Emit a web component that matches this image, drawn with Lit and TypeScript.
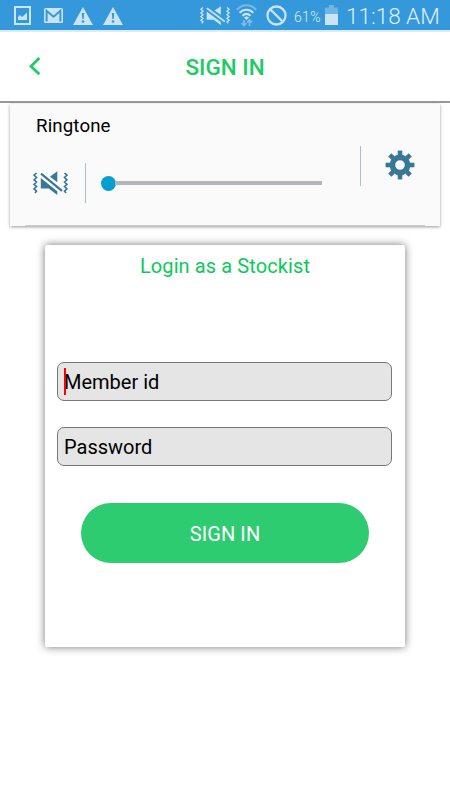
import { LitElement, html, css, svg } from "lit";
import { customElement } from "lit/decorators.js";

const muteShapes = svg`
  <path d="M3.5 2 1 4.2 3.5 6.5 1 8.8 3.5 11 1 13.3 3.5 15.6 1 17.9 3.5 20.1 2 22M31.5 2 34 4.2 31.5 6.5 34 8.8 31.5 11 34 13.3 31.5 15.6 34 17.9 31.5 20.1 33 22" fill="none" stroke="currentColor" stroke-width="1.6"/>
  <path d="M24.3.2V11.2L17 5.7ZM7.8 7 24.3 20.2V24L15.7 17.4H7.8Z" fill="currentColor"/>
  <path d="M8 2.6 29 19.8" stroke="currentColor" stroke-width="2.2"/>`;

@customElement("status-bar")
export class StatusBar extends LitElement {
  static styles = css`
    :host { display: flex; box-sizing: border-box; height: 32px; padding-left: 14px; background: #3498db; border-bottom: 2px solid #0c8ddb; border-image: linear-gradient(#078bdb 50%, #d9ecf8 50%) 2; color: #c9e4f6; align-items: center; }
    svg { display: block; flex: none; }
    .image { margin-top: 1px; }
    .mail { margin-left: 12.5px; margin-top: 1px; }
    .warn { margin-left: 10.5px; margin-top: 2px; }
    .warn.second { margin-left: 10px; }
    .mute { margin-left: 77px; }
    .wifi { margin-left: 6px; margin-top: 1px; }
    .block { margin-left: 9px; margin-top: 1px; }
    .percent { width: 27px; margin: 3px 0 0 7px; font: 300 14px/20px Roboto, sans-serif; white-space: nowrap; color: #def0fb; letter-spacing: 0.3px; }
    .battery { margin-left: 4px; }
    .clock { margin: 4px 0 0 8px; font: 300 22.6px/26px Roboto, sans-serif; white-space: nowrap; letter-spacing: -0.05px; color: #def0fb; }
  `;
  render() {
    const warning = svg`<path d="M10 0 20 18H0Z" fill="currentColor"/><path d="M8.8 6h2.4l-.5 6H9.3Z" fill="#3498db"/><circle cx="10" cy="14.5" r="1.3" fill="#3498db"/>`;
    return html`
      <svg class="image" width="17" height="19" viewBox="0 0 17 19"><path d="M1 1H16V18H1Z" fill="none" stroke="currentColor" stroke-width="2"/><path d="M4 14V11l2-2 2 2 5-4.5V14Z" fill="currentColor"/></svg>
      <svg class="mail" width="19" height="15" viewBox="0 0 19 15"><rect width="19" height="15" rx="1.5" fill="currentColor"/><path d="M2.6 13.5V2.8L9.5 8.7 16.4 2.8V13.5" fill="none" stroke="#3498db" stroke-width="2"/></svg>
      <svg class="warn" width="20" height="18" viewBox="0 0 20 18">${warning}</svg>
      <svg class="warn second" width="20" height="18" viewBox="0 0 20 18">${warning}</svg>
      <svg class="mute" width="30" height="19" viewBox="0 0 35 24" preserveAspectRatio="none">${muteShapes}</svg>
      <svg class="wifi" width="21" height="23" viewBox="0 0 21 23"><g fill="none" stroke="currentColor" stroke-width="2"><path d="M.8 5.8C6.3-.4 14.7-.4 20.2 5.8" opacity=".45"/><path d="M3.6 8.8c4-4.2 9.8-4.2 13.8 0"/><path d="M6.5 11.7c2.5-2.3 5.5-2.3 8 0"/></g><path d="M8 13.4Q10.5 11.6 13 13.4L10.5 16Z" fill="currentColor"/><g opacity=".5" stroke="currentColor" fill="none" stroke-width="1.7"><path d="M8 16V21.5M5.6 19 8 21.6 10.4 19M13.5 22V16M11.1 18.4 13.5 15.8l2.4 2.6"/></g></svg>
      <svg class="block" width="21" height="21" viewBox="0 0 21 21"><g fill="none" stroke="currentColor" stroke-width="2.3"><circle cx="10.5" cy="10.5" r="9"/><path d="M4.2 4.2 16.8 16.8"/></g></svg>
      <span class="percent">61%</span>
      <svg class="battery" width="13" height="20" viewBox="0 0 13 20"><path d="M4 0H9V2.5H13V9H0V2.5H4Z" fill="currentColor" opacity=".4"/><path d="M0 9H13V20H0Z" fill="currentColor"/></svg>
      <span class="clock">11:18 AM</span>`;
  }
}

@customElement("ringtone-panel")
export class RingtonePanel extends LitElement {
  static styles = css`
    :host { display: flex; flex-direction: column; box-sizing: border-box; height: 122px; margin: 1px 10px 0; background: #fafafa; box-shadow: 0 1px 3px rgba(0,0,0,.4); padding: 0 15px; }
    .body { display: flex; height: 122px; border-bottom: 1px solid #c9c9c9; box-sizing: border-box; }
    .left { width: 335px; }
    .label { padding: 9px 0 0 11px; font: 18.7px/26px Roboto, sans-serif; color: #000; letter-spacing: 0.12px; }
    .volume { display: flex; align-items: center; margin: 24px 0 0 8px; height: 40px; }
    .mute { color: #397799; }
    .rule { width: 1px; height: 40px; background: #adbdc9; margin: 0 15px 0 17px; }
    .knob { width: 15px; height: 15px; border-radius: 50%; background: #049fd1; }
    .track { width: 207px; height: 4px; margin-left: -1px; background: #b0b8bd; }
    .divider { width: 1px; height: 40px; margin-top: 42px; background: #adbdc9; }
    .gear { margin: 46px 0 0 24px; color: #397799; }
    svg { display: block; flex: none; }
  `;
  render() {
    return html`<div class="body">
      <div class="left">
        <div class="label">Ringtone</div>
        <div class="volume">
          <svg class="mute" width="35" height="24" viewBox="0 0 35 24">${muteShapes}</svg>
          <div class="rule"></div>
          <div class="knob"></div><div class="track"></div>
        </div>
      </div>
      <div class="divider"></div>
      <svg class="gear" width="30" height="30" viewBox="-15 -15 30 30">
        <circle r="7.6" fill="none" stroke="currentColor" stroke-width="5.6"/>
        ${[0, 45, 90, 135, 180, 225, 270, 315].map(a => svg`<path d="M-2.3-14.4H2.3V-9H-2.3Z" fill="currentColor" transform="rotate(${a})"/>`)}
      </svg>
    </div>`;
  }
}

@customElement("login-card")
export class LoginCard extends LitElement {
  static styles = css`
    :host { display: flex; flex-direction: column; align-items: center; box-sizing: border-box; width: 360px; height: 402px; margin: 19px auto 0; border-radius: 2px; background: #fff; box-shadow: 0 0 9px rgba(0,0,0,.55); font-family: Roboto, sans-serif; }
    .heading { margin-top: 7px; font-size: 20px; line-height: 28px; letter-spacing: 0.1px; color: #0cc95b; white-space: nowrap; }
    .field { display: flex; align-items: center; box-sizing: border-box; width: 335px; height: 39px; margin-right: 1px; border: 1px solid #777; border-radius: 7px; background: #e5e5e5; padding: 1px 0 0 6px; font-size: 20px; line-height: 28px; color: #000; }
    .member { margin-top: 82px; }
    .password { margin-top: 26px; }
    .caret { position: relative; width: 2px; height: 27px; margin: -2px -2px 0 0; background: #f00; }
    .submit { width: 288px; height: 60px; margin: 37px 0 0; padding: 2px 0 0; border: 0; border-radius: 30px; background: #2ecc71; color: #fff; font: 20px/28px Roboto, sans-serif; box-sizing: border-box; letter-spacing: 0.1px; }
  `;
  render() {
    return html`
      <div class="heading">Login as a Stockist</div>
      <div class="field member"><span class="caret"></span>Member id</div>
      <div class="field password">Password</div>
      <button class="submit">SIGN IN</button>`;
  }
}

@customElement("app-root")
export class AppRoot extends LitElement {
  static styles = css`
    :host { display: block; width: 450px; height: 800px; overflow: hidden; background: #fff; }
    header { display: grid; grid-template-columns: 80px 1fr 80px; align-items: center; box-sizing: border-box; height: 71px; border-bottom: 2px solid #999; }
    .back { display: block; margin: -2px 0 0 29px; }
    h1 { margin: 1px 0 0; text-align: center; font: 500 22.5px/28px Roboto, sans-serif; color: #20ca64; }
  `;
  render() {
    return html`
      <status-bar></status-bar>
      <header>
        <svg class="back" width="12" height="18" viewBox="0 0 12 18"><path d="M10.3 1 2 9.2 10.3 17.2" fill="none" stroke="#20ca64" stroke-width="2.8"/></svg>
        <h1>SIGN IN</h1>
      </header>
      <ringtone-panel></ringtone-panel>
      <login-card></login-card>`;
  }
}
